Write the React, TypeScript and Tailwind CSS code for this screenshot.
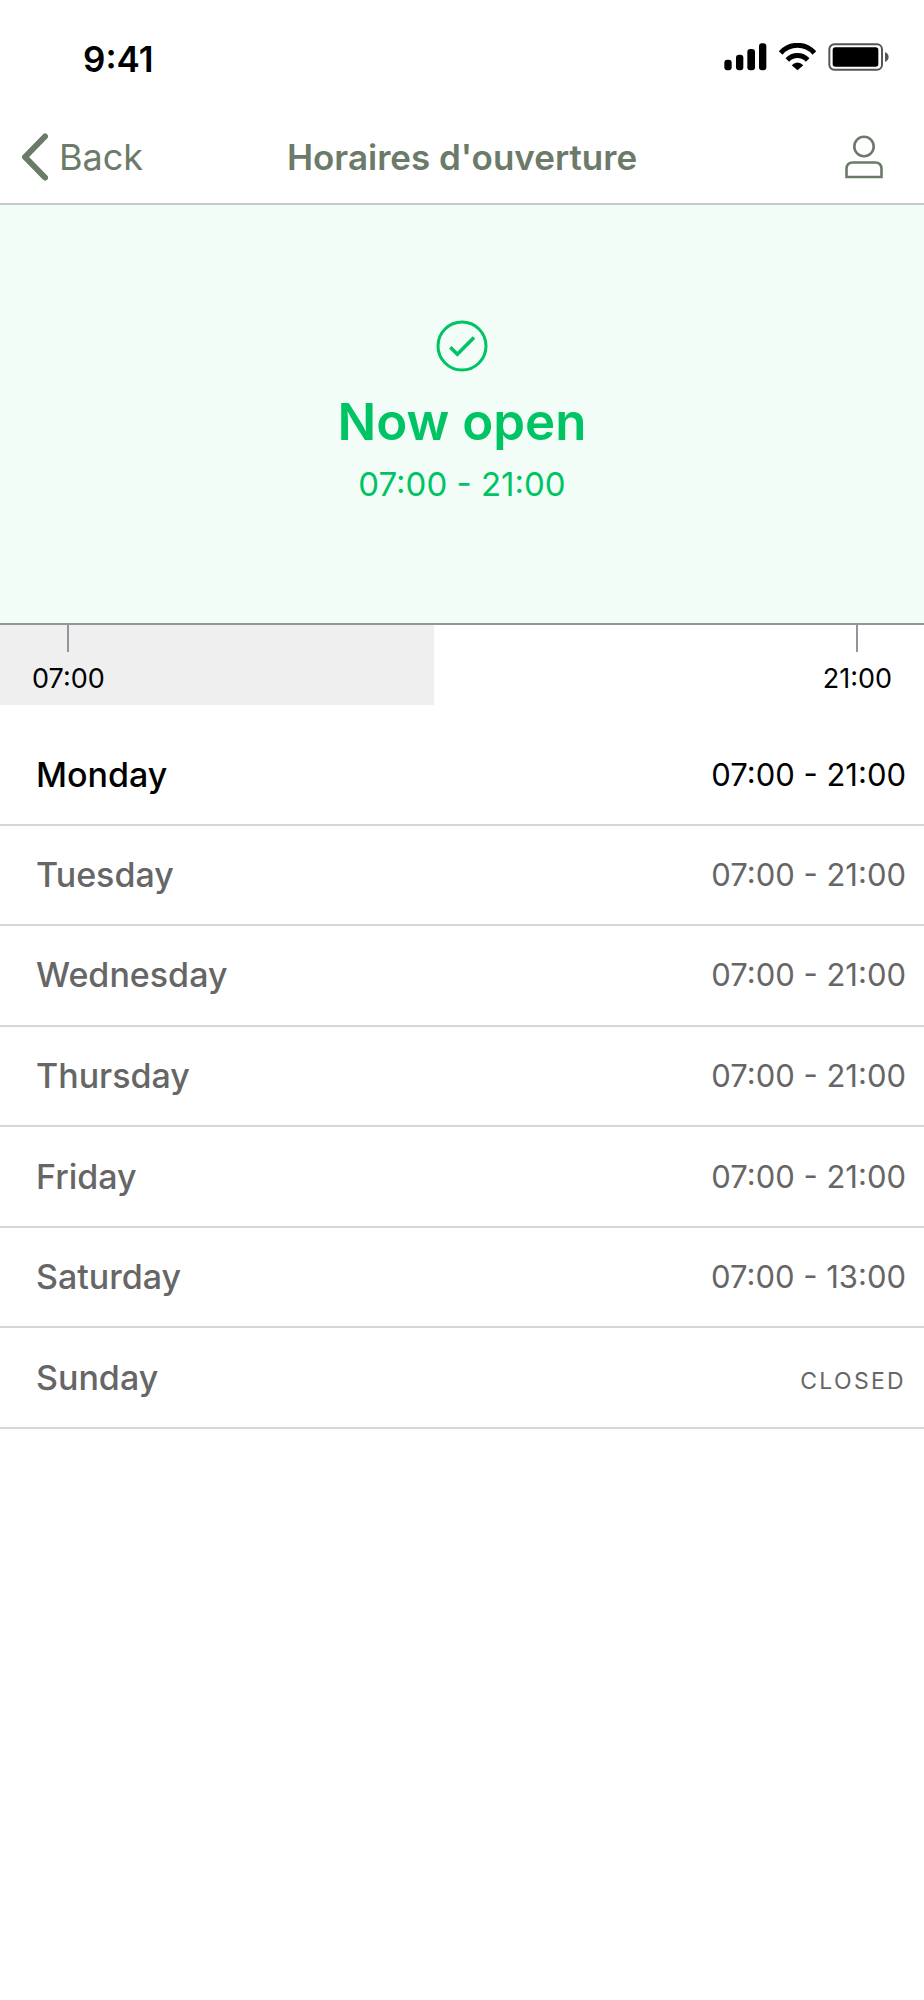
import clsx from "clsx";

const schedule = [
  { day: "Monday", hours: "07:00 - 21:00" },
  { day: "Tuesday", hours: "07:00 - 21:00" },
  { day: "Wednesday", hours: "07:00 - 21:00" },
  { day: "Thursday", hours: "07:00 - 21:00" },
  { day: "Friday", hours: "07:00 - 21:00" },
  { day: "Saturday", hours: "07:00 - 13:00" },
  { day: "Sunday", hours: null },
];

const today = "Monday";
const elapsed = 47;

function StatusBar() {
  return (
    <div className="flex justify-between pt-[39px] pb-[34px] pl-[83px] pr-[35px]">
      <span className="text-[35px] font-semibold leading-10 text-black">9:41</span>
      <div className="flex items-start gap-3 pt-1">
        <svg width="43" height="28" viewBox="0 0 129 84" aria-hidden="true">
          <rect x="1" y="50" width="22" height="32" rx="9" />
          <rect x="36" y="35" width="22" height="47" rx="9" />
          <rect x="70" y="18" width="23" height="64" rx="9" />
          <rect x="105" y="1" width="22" height="81" rx="9" />
        </svg>
        <svg width="37" height="28" viewBox="0 0 111 84" aria-hidden="true">
          <path d="M5 30A67 67 0 0 1 106 30" fill="none" stroke="#000" strokeWidth="15" />
          <path d="M25 51A42 42 0 0 1 86 51" fill="none" stroke="#000" strokeWidth="15" />
          <path d="M38 67Q55.500 50 73 67L55.500 82Z" />
        </svg>
        <svg width="61" height="28" viewBox="0 0 183 84" aria-hidden="true">
          <rect x="4" y="4" width="158" height="76" rx="15" fill="none" stroke="#555" strokeWidth="6" />
          <rect x="14" y="13" width="137" height="58" rx="8" />
          <path d="M171 27Q182 32 182 42T171 57Z" fill="#555" />
        </svg>
      </div>
    </div>
  );
}

function NavBar() {
  return (
    <header className="grid h-[92px] grid-cols-[1fr_auto_1fr] items-center border-b-2 border-[#c8c8c8] pb-0.5 px-5 text-[#6b7a69]">
      <button type="button" className="flex items-center gap-[11px] justify-self-start text-[36px] leading-12">
        <svg width="28" height="48" viewBox="0 0 28 48" fill="none" stroke="currentColor" strokeWidth="6" strokeLinecap="round" strokeLinejoin="round" aria-hidden="true">
          <path d="M25 3.500L5 24L25 44.500" />
        </svg>
        Back
      </button>
      <h1 className="text-[35px] font-semibold leading-12">Horaires d'ouverture</h1>
      <button type="button" aria-label="Account" className="justify-self-end pr-5">
        <svg width="40" height="44" viewBox="0 0 40 44" fill="none" stroke="currentColor" strokeWidth="2.600" aria-hidden="true">
          <circle cx="20" cy="11.500" r="9.700" />
          <path d="M2.500 42V34Q2.500 27.500 9 27.500H31Q37.500 27.500 37.500 34V42Z" />
        </svg>
      </button>
    </header>
  );
}

function OpenBanner() {
  return (
    <section className="flex h-[420px] flex-col items-center border-b-2 border-[#92959c] bg-[#f3fdf8] pt-[115px] text-[#00c364]">
      <svg width="52" height="52" viewBox="0 0 52 52" fill="none" stroke="currentColor" strokeWidth="3" aria-hidden="true">
        <circle cx="26" cy="26" r="24" />
        <path d="M14.300 27.300L21.300 34.300L38 17.500" strokeWidth="3.600" />
      </svg>
      <h2 className="mt-[18px] text-[51px] font-semibold leading-16">Now open</h2>
      <p className="mt-1.5 text-[33px] leading-12">07:00 - 21:00</p>
    </section>
  );
}

function TimeMark({ time }: { time: string }) {
  return (
    <div className="relative flex flex-col items-center">
      <span className="h-[27px] w-0.5 bg-[#92959c]" />
      <span className="mt-[9px] text-[27px] leading-9 text-black">{time}</span>
    </div>
  );
}

function Timeline() {
  return (
    <div className="relative flex h-20 justify-between px-8">
      <div className="absolute inset-y-0 left-0 bg-[#efefef]" style={{ width: `${elapsed}%` }} />
      <TimeMark time="07:00" />
      <TimeMark time="21:00" />
    </div>
  );
}

function Schedule() {
  return (
    <table className="mt-[21px] h-[703px] w-full">
      <tbody>
        {schedule.map(({ day, hours }) => (
          <tr
            key={day}
            className={clsx("border-b-2 border-[#d5d5da]", day === today ? "text-black" : "text-[#666]")}
          >
            <th scope="row" className="pl-9 text-left text-[34px] font-medium leading-12">
              {day}
            </th>
            <td className="pr-[18px] text-right text-[31px] leading-12">
              {hours ?? <span className="text-[23px] uppercase leading-none tracking-widest">Closed</span>}
            </td>
          </tr>
        ))}
      </tbody>
    </table>
  );
}

export default function App() {
  return (
    <main className="min-h-screen bg-white font-['Inter',sans-serif]">
      <StatusBar />
      <NavBar />
      <OpenBanner />
      <Timeline />
      <Schedule />
    </main>
  );
}
